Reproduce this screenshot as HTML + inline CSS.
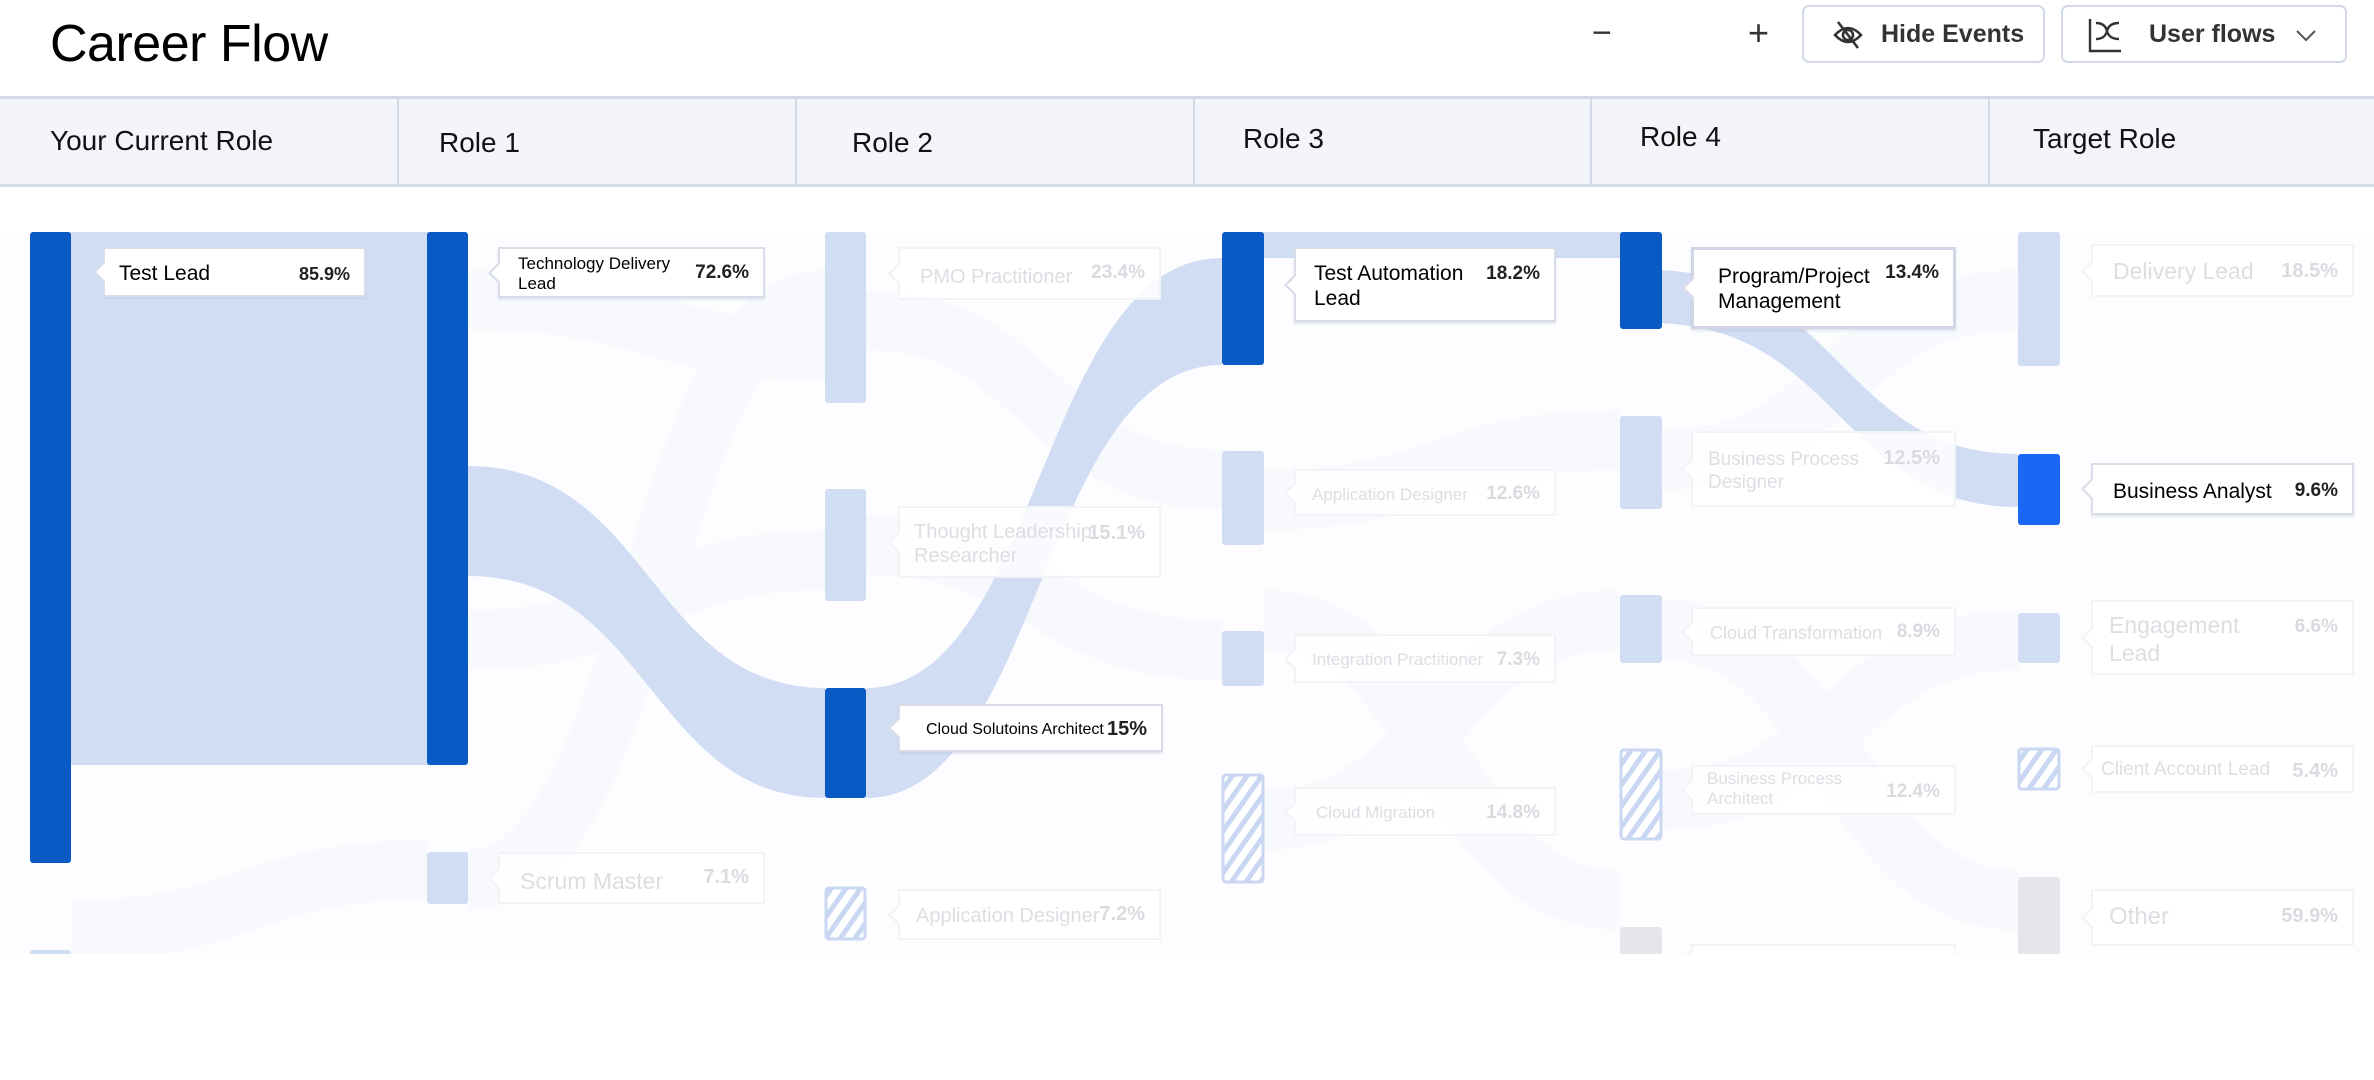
<!DOCTYPE html>
<html><head><meta charset="utf-8">
<style>
*{margin:0;padding:0;box-sizing:border-box}
body{width:2374px;height:1080px;background:#fff;font-family:"Liberation Sans",Arial,sans-serif;position:relative;overflow:hidden}
.abs{position:absolute}
.title{left:50px;top:14px;font-size:52px;color:#000;letter-spacing:-0.5px}
.btn{position:absolute;top:5px;height:58px;border:2px solid #d3dae7;border-radius:7px;background:#fff}
.btn span{position:absolute;top:13px;font-size:25px;font-weight:bold;color:#333}
.hdr{position:absolute;left:0;top:96px;width:2374px;height:91px;background:#f3f5fa;border-top:3px solid #d3d9e6;border-bottom:3px solid #d3d9e6}
.hdr .c{position:absolute;top:0;height:85px;border-left:2px solid #d3d9e6}
.hdr .t{position:absolute;font-size:28px;color:#111}
.lbl{position:absolute;background:#fff;border:2px solid #d8dde9;box-shadow:0 2px 2px rgba(180,190,210,.35)}
.lbl:before{content:"";position:absolute;left:-12px;top:50%;margin-top:-12px;border-right:12px solid #d8dde9;border-top:12px solid transparent;border-bottom:12px solid transparent}
.lbl:after{content:"";position:absolute;left:-9px;top:50%;margin-top:-10px;border-right:10px solid #fff;border-top:10px solid transparent;border-bottom:10px solid transparent}
.lbl .n{position:absolute;color:#000;line-height:1.2}
.lbl .p{position:absolute;right:14px;font-weight:bold;color:#222}
.f{border-color:#f2f3f7;box-shadow:none;background:rgba(255,255,255,.85)}
.f:before{border-right-color:#f2f3f7}
.f .n{color:#dcdee3}.f .p{color:#d9dbe0}
</style></head><body>
<div class="abs title">Career Flow</div>
<div class="abs" style="left:1592px;top:14px;font-size:34px;color:#333">−</div>
<div class="abs" style="left:1748px;top:12px;font-size:36px;color:#333">+</div>
<div class="btn" style="left:1802px;width:243px">
<svg class="abs" style="left:28px;top:13px" width="32" height="30" viewBox="0 0 32 30" fill="none" stroke="#333" stroke-width="2.6"><path d="M3 15 Q16 1 29 15 Q16 29 3 15Z"/><circle cx="16" cy="15" r="5"/><path d="M6 2 L26 28"/></svg>
<span style="left:77px">Hide Events</span></div>
<div class="btn" style="left:2061px;width:286px">
<svg class="abs" style="left:24px;top:10px" width="36" height="36" viewBox="0 0 36 36" fill="none" stroke="#333" stroke-width="2.4"><path d="M3 2 V34 H34"/><path d="M9 6 Q18 6 20 14 Q22 22 32 22"/><path d="M9 22 Q18 22 20 14 Q22 6 32 6"/></svg>
<span style="left:86px">User flows</span>
<svg class="abs" style="left:232px;top:22px" width="22" height="14" viewBox="0 0 22 14" fill="none" stroke="#555" stroke-width="2"><path d="M2 2 L11 11 L20 2"/></svg></div>

<div class="hdr">
<div class="c" style="left:397px"></div><div class="c" style="left:795px"></div><div class="c" style="left:1193px"></div><div class="c" style="left:1590px"></div><div class="c" style="left:1988px"></div>
<div class="t" style="left:50px;top:26px">Your Current Role</div>
<div class="t" style="left:439px;top:28px">Role 1</div>
<div class="t" style="left:852px;top:28px">Role 2</div>
<div class="t" style="left:1243px;top:24px">Role 3</div>
<div class="t" style="left:1640px;top:22px">Role 4</div>
<div class="t" style="left:2033px;top:24px">Target Role</div>
</div>

<svg class="abs" style="left:0;top:0" width="2374" height="954" viewBox="0 0 2374 954">
<defs>
<pattern id="h" width="12" height="12" patternUnits="userSpaceOnUse" patternTransform="rotate(35)"><rect width="12" height="12" fill="#fff"/><rect width="5" height="12" fill="#c9d7f2"/></pattern>
</defs>
<rect x="0" y="232" width="2374" height="722" fill="#fdfdff"/>
<g fill="none" stroke="#f7f9fd" stroke-width="60">
<path d="M71 930 C250 930 250 870 427 870"/>
<path d="M468 300 C650 300 650 350 825 350"/>
<path d="M468 640 C650 640 650 560 825 560"/>
<path d="M866 320 C1040 320 1040 480 1222 480"/>
<path d="M866 545 C1040 545 1040 650 1222 650"/>
<path d="M1264 500 C1440 500 1440 440 1620 440"/>
<path d="M1264 820 C1440 820 1440 620 1620 620"/>
<path d="M1662 460 C1840 460 1840 300 2018 300"/>
<path d="M1662 630 C1840 630 1840 900 2018 900"/>
<path d="M1662 800 C1840 800 1840 640 2018 640"/>
<path d="M468 880 C650 880 650 300 825 300"/>
<path d="M1264 620 C1440 620 1440 900 1620 900"/>
</g>
<rect x="60" y="232" width="380" height="533" fill="#d1ddf3"/>
<path d="M468 466 C650 466 650 688 825 688 L825 798 C650 798 650 576 468 576Z" fill="#d1ddf3"/>
<path d="M866 688 C1040 688 1040 258 1222 258 L1222 365 C1040 365 1040 798 866 798Z" fill="#d1ddf3"/>
<rect x="1250" y="232" width="390" height="26" fill="#d1ddf3"/>
<path d="M1650 270 C1840 270 1840 454 2018 454 L2018 507 C1840 507 1840 323 1650 323Z" fill="#d1ddf3"/>
<g>
<rect x="30" y="232" width="41" height="631" rx="3" fill="#0a5ac6"/>
<rect x="30" y="950" width="41" height="10" rx="3" fill="#d1ddf3"/>
<rect x="427" y="232" width="41" height="533" rx="3" fill="#0a5ac6"/>
<rect x="427" y="852" width="41" height="52" rx="3" fill="#d1ddf3"/>
<rect x="825" y="232" width="41" height="171" rx="3" fill="#d1ddf3"/>
<rect x="825" y="489" width="41" height="112" rx="3" fill="#d1ddf3"/>
<rect x="825" y="688" width="41" height="110" rx="3" fill="#0a5ac6"/>
<rect x="826" y="888" width="39" height="51" rx="3" fill="url(#h)" stroke="#c9d7f2" stroke-width="3"/>
<rect x="1222" y="232" width="42" height="133" rx="3" fill="#0a5ac6"/>
<rect x="1222" y="451" width="42" height="94" rx="3" fill="#d1ddf3"/>
<rect x="1222" y="631" width="42" height="55" rx="3" fill="#d1ddf3"/>
<rect x="1223" y="775" width="40" height="107" rx="3" fill="url(#h)" stroke="#c9d7f2" stroke-width="3"/>
<rect x="1620" y="232" width="42" height="97" rx="3" fill="#0a5ac6"/>
<rect x="1620" y="416" width="42" height="93" rx="3" fill="#d1ddf3"/>
<rect x="1620" y="595" width="42" height="68" rx="3" fill="#d1ddf3"/>
<rect x="1621" y="750" width="40" height="89" rx="3" fill="url(#h)" stroke="#c9d7f2" stroke-width="3"/>
<rect x="1620" y="927" width="42" height="40" rx="3" fill="#e4e6ea"/>
<rect x="2018" y="232" width="42" height="134" rx="3" fill="#d1ddf3"/>
<rect x="2018" y="454" width="42" height="71" rx="3" fill="#1a66f5"/>
<rect x="2018" y="613" width="42" height="50" rx="3" fill="#d1ddf3"/>
<rect x="2019" y="749" width="40" height="40" rx="3" fill="url(#h)" stroke="#c9d7f2" stroke-width="3"/>
<rect x="2018" y="877" width="42" height="90" rx="3" fill="#e4e6ea"/>
</g>
</svg>

<div class="lbl" style="left:103px;top:247px;width:263px;height:50px"><div class="n" style="left:14px;top:12px;font-size:21px">Test Lead</div><div class="p" style="top:15px;font-size:18px">85.9%</div></div>
<div class="lbl" style="left:498px;top:247px;width:267px;height:51px"><div class="n" style="left:18px;top:5px;font-size:17px">Technology Delivery<br>Lead</div><div class="p" style="top:13px;font-size:19px">72.6%</div></div>
<div class="lbl f" style="left:898px;top:247px;width:263px;height:53px"><div class="n" style="left:20px;top:16px;font-size:20px">PMO Practitioner</div><div class="p" style="top:13px;font-size:19px">23.4%</div></div>
<div class="lbl f" style="left:898px;top:506px;width:263px;height:72px"><div class="n" style="left:14px;top:12px;font-size:20px">Thought Leadership<br>Researcher</div><div class="p" style="top:14px;font-size:20px">15.1%</div></div>
<div class="lbl" style="left:898px;top:704px;width:265px;height:48px"><div class="n" style="left:26px;top:14px;font-size:16px">Cloud Solutoins Architect</div><div class="p" style="top:12px;font-size:20px">15%</div></div>
<div class="lbl f" style="left:898px;top:889px;width:263px;height:51px"><div class="n" style="left:16px;top:13px;font-size:20px">Application Designer</div><div class="p" style="top:12px;font-size:20px">7.2%</div></div>
<div class="lbl f" style="left:498px;top:852px;width:267px;height:52px"><div class="n" style="left:20px;top:14px;font-size:23px">Scrum Master</div><div class="p" style="top:12px;font-size:20px">7.1%</div></div>
<div class="lbl" style="left:1294px;top:247px;width:262px;height:75px"><div class="n" style="left:18px;top:12px;font-size:21px">Test Automation<br>Lead</div><div class="p" style="top:14px;font-size:19px">18.2%</div></div>
<div class="lbl f" style="left:1294px;top:469px;width:262px;height:47px"><div class="n" style="left:16px;top:14px;font-size:17px">Application Designer</div><div class="p" style="top:12px;font-size:19px">12.6%</div></div>
<div class="lbl f" style="left:1294px;top:634px;width:262px;height:49px"><div class="n" style="left:16px;top:14px;font-size:17px">Integration Practitioner</div><div class="p" style="top:13px;font-size:19px">7.3%</div></div>
<div class="lbl f" style="left:1294px;top:787px;width:262px;height:49px"><div class="n" style="left:20px;top:14px;font-size:17px">Cloud Migration</div><div class="p" style="top:13px;font-size:19px">14.8%</div></div>
<div class="lbl" style="left:1691px;top:247px;width:265px;height:82px;border:3px solid #d0d6e3"><div class="n" style="left:24px;top:14px;font-size:21px">Program/Project<br>Management</div><div class="p" style="top:12px;font-size:19px">13.4%</div></div>
<div class="lbl f" style="left:1691px;top:431px;width:265px;height:76px"><div class="n" style="left:15px;top:16px;font-size:19px">Business Process<br>Designer</div><div class="p" style="top:14px;font-size:20px">12.5%</div></div>
<div class="lbl f" style="left:1691px;top:607px;width:265px;height:49px"><div class="n" style="left:17px;top:14px;font-size:18px">Cloud Transformation</div><div class="p" style="top:12px;font-size:19px">8.9%</div></div>
<div class="lbl f" style="left:1691px;top:765px;width:265px;height:50px"><div class="n" style="left:14px;top:2px;font-size:17px">Business Process<br>Architect</div><div class="p" style="top:14px;font-size:19px">12.4%</div></div>
<div class="lbl f" style="left:1691px;top:944px;width:265px;height:30px"></div>
<div class="lbl f" style="left:2091px;top:244px;width:263px;height:53px"><div class="n" style="left:20px;top:12px;font-size:23px">Delivery Lead</div><div class="p" style="top:14px;font-size:20px">18.5%</div></div>
<div class="lbl" style="left:2091px;top:463px;width:263px;height:52px"><div class="n" style="left:20px;top:14px;font-size:21px">Business Analyst</div><div class="p" style="top:15px;font-size:19px">9.6%</div></div>
<div class="lbl f" style="left:2091px;top:600px;width:263px;height:75px"><div class="n" style="left:16px;top:10px;font-size:23px">Engagement<br>Lead</div><div class="p" style="top:14px;font-size:19px">6.6%</div></div>
<div class="lbl f" style="left:2091px;top:745px;width:263px;height:48px"><div class="n" style="left:8px;top:12px;font-size:19px">Client Account Lead</div><div class="p" style="top:13px;font-size:20px">5.4%</div></div>
<div class="lbl f" style="left:2091px;top:889px;width:263px;height:57px"><div class="n" style="left:16px;top:12px;font-size:24px">Other</div><div class="p" style="top:14px;font-size:20px">59.9%</div></div>
<div class="abs" style="left:0;top:954px;width:2374px;height:126px;background:#fff"></div>
</body></html>
